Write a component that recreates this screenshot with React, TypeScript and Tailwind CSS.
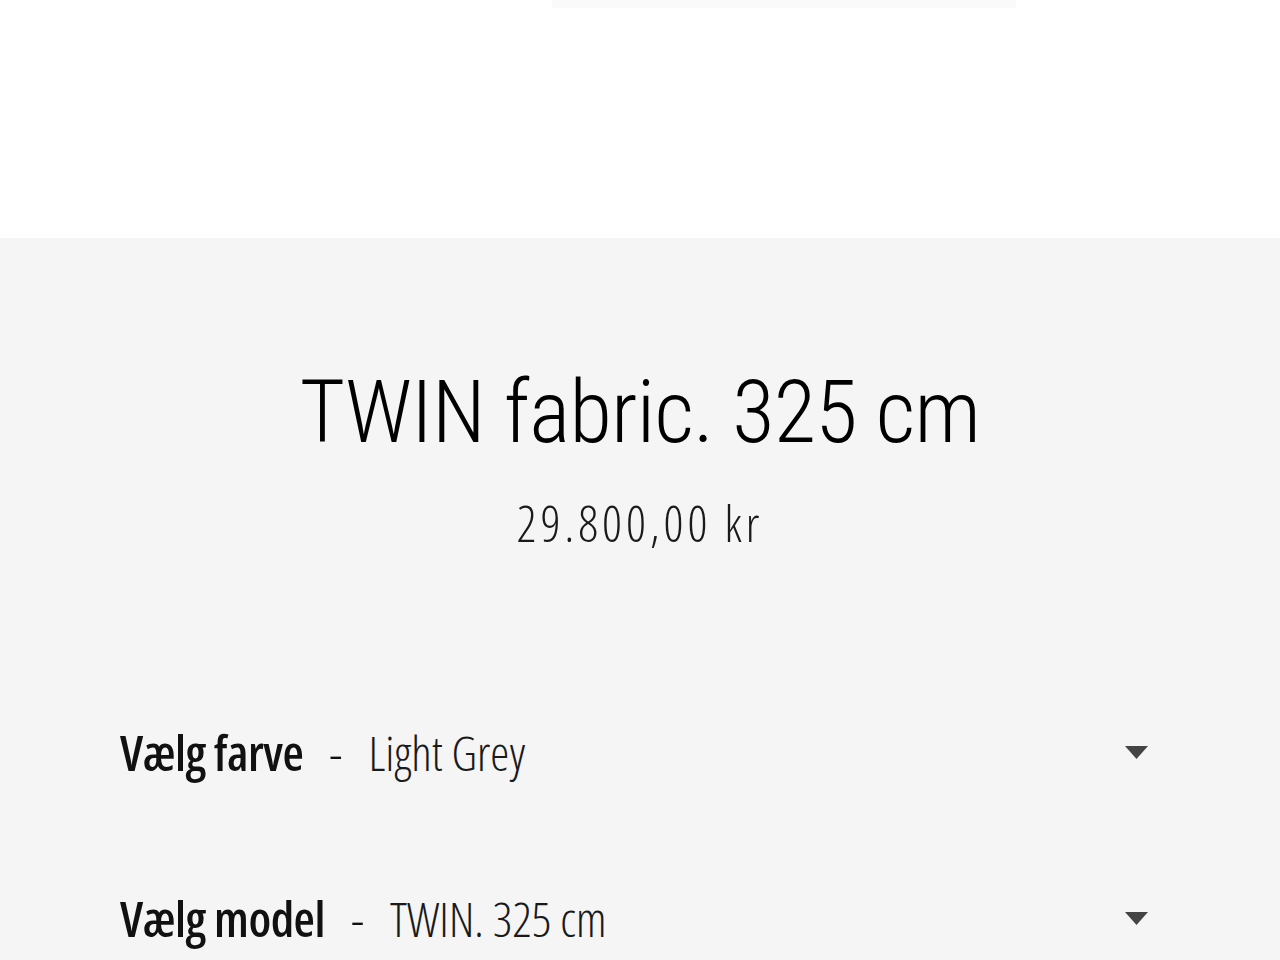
function Caret() {
  return (
    <svg width="23" height="13" viewBox="0 0 23 13" className="mr-[12px] shrink-0">
      <path d="M0 0 L23 0 L11.5 13 Z" fill="#444444" />
    </svg>
  );
}

function OptionRow({ label, value }: { label: string; value: string }) {
  return (
    <div className="flex items-center justify-between">
      <div className="flex items-center leading-none text-[#111111]">
        <span className="font-semibold text-[49px] tracking-[-0.5px]">{label}</span>
        <span className="font-light text-[49px] mx-[26px]">-</span>
        <span className="font-light text-[48px] text-[#1a1a1a]">{value}</span>
      </div>
      <Caret />
    </div>
  );
}

export default function App() {
  return (
    <div className="min-h-screen bg-[#f5f5f5] font-['Open_Sans',sans-serif] [font-stretch:75%]">
      <div className="h-[238px] bg-white">
        <div className="ml-[552px] w-[464px] h-[8px] bg-[#fafafa]" />
      </div>

      <div className="pt-[131px] flex flex-col items-center">
        <h1 className="font-['Roboto',sans-serif] text-[87px] leading-none font-light text-black tracking-[-0.7px]">
          TWIN fabric. 325 cm
        </h1>
        <div className="mt-[43px] text-[49px] leading-none font-light tracking-[4px] text-[#1a1a1a]">
          29.800,00 kr
        </div>
      </div>

      <div className="mt-[180px] px-[120px] flex flex-col gap-[117px]">
        <OptionRow label="Vælg farve" value="Light Grey" />
        <OptionRow label="Vælg model" value="TWIN. 325 cm" />
      </div>
    </div>
  );
}
